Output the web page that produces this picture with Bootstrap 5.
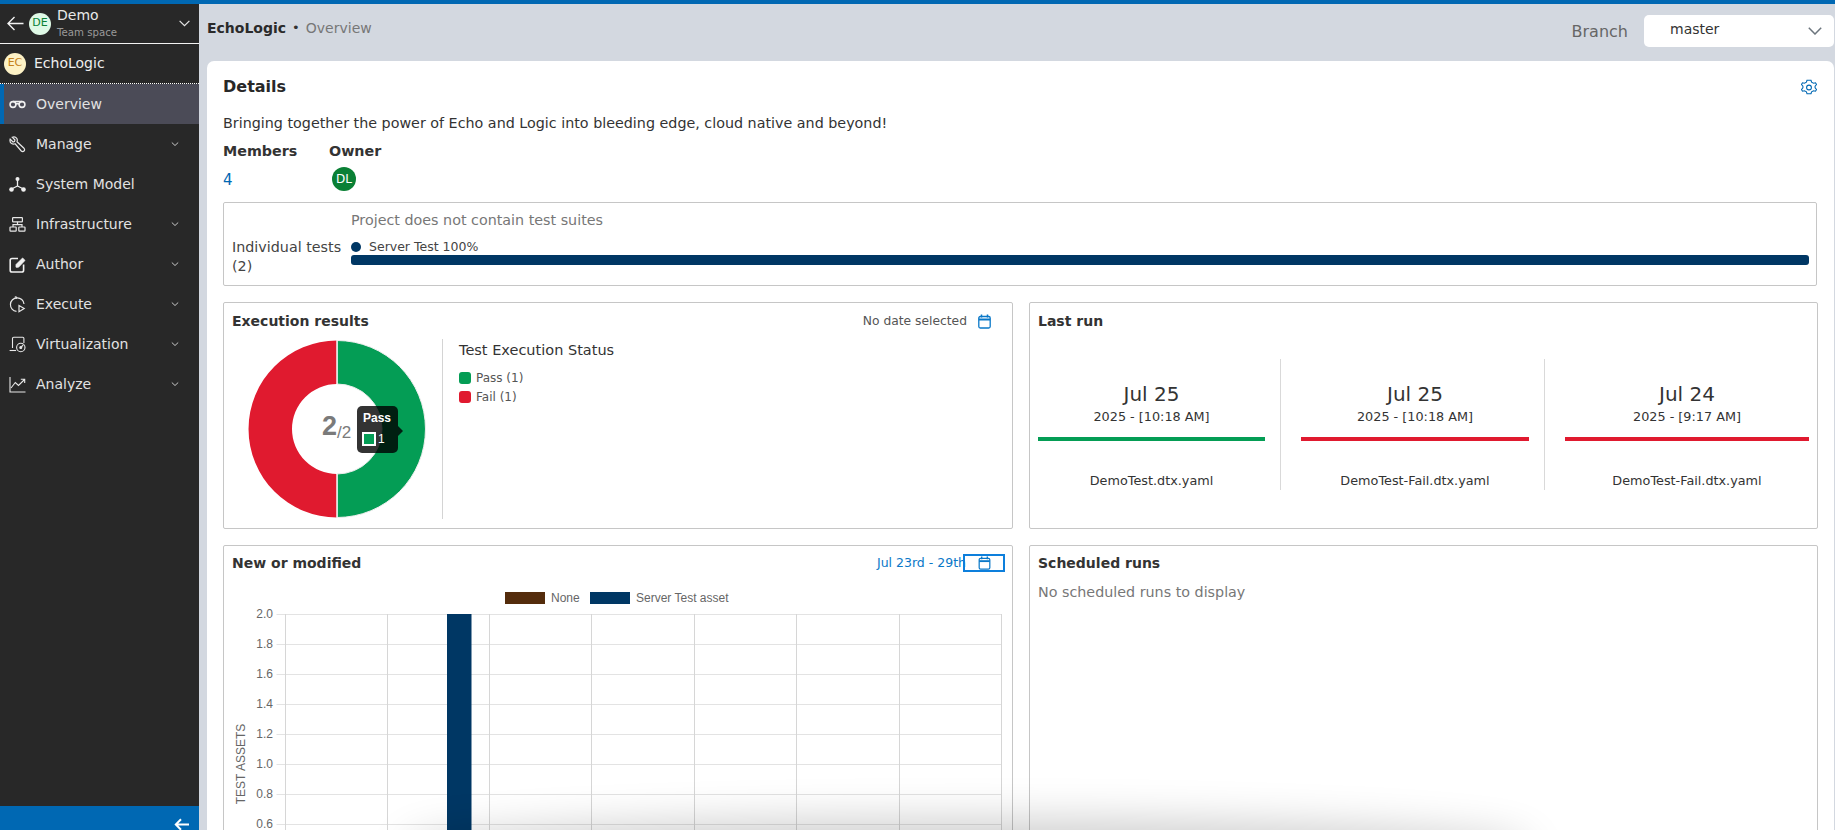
<!DOCTYPE html>
<html lang="en">
<head>
<meta charset="utf-8">
<title>EchoLogic Overview</title>
<link href="https://cdn.jsdelivr.net/npm/bootstrap@5.3.0/dist/css/bootstrap.min.css" rel="stylesheet">
<style>
html,body{height:830px;overflow:hidden}
body{font-family:"DejaVu Sans",sans-serif;font-size:14.3px;color:#333;background:#d3d8e0}
.ts-top{height:4px;background:#0068b3;flex:none}
.ts-shell{height:826px}
.ts-side{width:199px;flex:none;background:#282828;color:#e2e2e2}
.ts-space{height:40px;border-bottom:1px solid #f2f2f2;padding:0 0 0 7px;flex:none}
.ts-avatar{width:22px;height:22px;border-radius:50%;font-size:11px;flex:none}
.ts-de{background:#dff9e6;color:#0a8035;margin:0 6px 0 5px}
.ts-ec{background:#fdf2c6;color:#c5821b;margin-right:8px}
.ts-sname{font-size:14px;line-height:15px;color:#e8e8e8}
.ts-ssub{font-size:10.2px;line-height:13px;color:#9a9a9a;margin-top:3px}
.ts-project{height:40px;padding-left:4px;border-bottom:1px dotted #fff;font-size:14px;color:#eee;flex:none}
.ts-item{height:40px;padding-left:9px;color:#e2e2e2;font-size:14px;border-left:0 solid #0068b3;flex:none}
.ts-item svg.ts-ico{width:17px;height:17px;margin-right:10px;flex:none}
.ts-on{background:#4b4b57;border-left-width:4px;padding-left:5px}
.ts-chev{margin-left:auto;margin-right:20px;width:8px;height:8px}
.ts-foot{height:24px;background:#0068b3;padding:12px 10px 0 0;flex:none}
.ts-main{min-width:0;margin-left:8px}
.ts-crumb{height:57px;padding:0 1px 4px 0;flex:none;font-size:14px}
.ts-crumb b{color:#2a2a2a;margin-bottom:5px}
.ts-dot{font-size:13px;margin:0 6px 5px;color:#333}
.ts-view{color:#777;margin-bottom:5px}
.ts-branch{font-size:16px;color:#666;margin:3px 16px 0 0}
.ts-select{width:190px;height:32px;border-radius:5px;background:#fff;padding:0 12px 3px 26px;font-size:14px}
.ts-sheet{background:#fff;border-radius:7px 7px 0 0;padding:15px 17px 0 16px;margin-right:1px;flex:1 1 auto;min-height:0;overflow:hidden}
.ts-h1{font-size:16px;font-weight:700;color:#282828;line-height:22px}
.ts-para{line-height:20px;margin:15px 0 0}
.ts-lbl{font-weight:700;line-height:18px;margin-top:9px}
.ts-four{color:#0068b3;font-size:15px;line-height:24px;margin-top:8px}
.ts-dl{width:24px;height:24px;border-radius:50%;background:#0a8035;color:#fff;font-size:12px;margin:7px 0 0 3px}
.ts-box{border:1px solid #c6c6c6;border-radius:2px;background:#fff}
.ts-tests{height:84px;margin-top:10px;padding:0 7px 0 8px}
.ts-tlabel{width:119px;line-height:19px;margin-top:35px;color:#444;flex:none}
.ts-muted{color:#777}
.ts-suite{font-size:12.5px;line-height:14px;margin-top:10px;color:#444}
.ts-pdot{width:10px;height:10px;border-radius:50%;background:#003764;display:inline-block;margin:0 8px 0 0}
.ts-pbar{height:10px;border-radius:3px;background:#003764;margin-top:1px}
.ts-grid{display:grid;grid-template-columns:790px 789px;column-gap:16px;margin-top:16px;row-gap:16px}
.ts-res{height:227px;padding:9px 8px;position:relative}
.ts-title{font-size:14px;font-weight:700;line-height:18px;color:#333}
.ts-date{font-size:12.3px;color:#555;margin-right:11px}
.ts-legend{font-size:12px;color:#555;line-height:18.500px}
.ts-sw{width:12px;height:12px;border-radius:3px;margin-right:5px;display:inline-block;vertical-align:-2px}
.ts-green{background:#049d55}
.ts-red{background:#e01a2f}
.ts-divider{width:1px;background:#d4d4d4;height:180px;margin:7px 16px 0 8px;flex:none}
.ts-tip{position:absolute;left:133px;top:103px;width:41px;height:47px;border-radius:5px;background:rgba(0,0,0,.8);color:#fff;font-family:"Liberation Sans",sans-serif;font-size:12px;padding:3px 6px}
.ts-tip::after{content:"";position:absolute;right:-5px;top:20px;border:5px solid transparent;border-left-color:rgba(0,0,0,.8);border-right:0}
.ts-swatch{width:14px;height:14px;border:2px solid #fff;background:#049d55;margin:5px 2px 0 -1px;flex:none}
.ts-runcol{width:244px;text-align:center;flex:none;padding-top:22px}
.ts-day{font-size:20px;line-height:26px;color:#333}
.ts-year{font-size:12.8px;line-height:18px;color:#333;margin-top:1px}
.ts-rule{height:4px;margin:11px 0 31px}
.ts-file{font-size:12.8px;line-height:18px;color:#333}
.ts-sep{width:1px;height:131px;background:#d9d9d9;margin:0 20px 0 15px;flex:none}
.ts-new{height:400px;padding:8px 8px}
.ts-range{color:#0a78c8;font-size:12.5px;margin-right:-3px}
.ts-calbox{width:42px;height:18px;border:2px solid #0d7fdc;flex:none;margin-right:-1px}
.ts-chart{display:block;margin:4px 0 0 -9px}
.ts-donut{margin-top:5px;flex:none}
.ts-status{line-height:18px;margin:9px 0 10px;color:#333;font-size:14.5px}
.ts-fade{position:absolute;left:430px;right:330px;top:844px;height:20px;border-radius:50%;box-shadow:0 0 44px 24px rgba(0,0,0,.2);pointer-events:none}
</style>
</head>
<body>
<div class="ts-top"></div>
<div class="ts-shell d-flex">
  <aside class="ts-side d-flex flex-column">
    <div class="ts-space d-flex align-items-center">
      <svg width="17" height="15" viewBox="0 0 17 15" fill="none" stroke="#f2f2f2" stroke-width="1.4"><path d="M16.500 7.500H1M7.500 1L1 7.500l6.500 6.500"/></svg>
      <span class="ts-avatar ts-de d-flex align-items-center justify-content-center">DE</span>
      <div><div class="ts-sname">Demo</div><div class="ts-ssub">Team space</div></div>
      <svg class="ms-auto" style="margin-right:9px" width="11" height="7" viewBox="0 0 11 7" fill="none" stroke="#e6e6e6" stroke-width="1.2"><path d="M.6.800l4.900 4.900L10.400.800"/></svg>
    </div>
    <div class="ts-project d-flex align-items-center">
      <span class="ts-avatar ts-ec d-flex align-items-center justify-content-center">EC</span>EchoLogic
    </div>
    <div class="ts-item ts-on d-flex align-items-center">
      <svg class="ts-ico" viewBox="0 0 17 17" fill="none" stroke="#f0f0f0" stroke-width="1.6"><circle cx="4" cy="8.500" r="2.900"/><circle cx="13" cy="8.500" r="2.900"/><path d="M4 5.500h9M6.500 8c1.400-.5 2.600-.5 4 0"/></svg>Overview
    </div>
    <div class="ts-item d-flex align-items-center">
      <svg class="ts-ico" viewBox="0 0 17 17" fill="none" stroke="#e8e8e8" stroke-width="1.200"><path d="M3.200 1.200L6 4 5.500 5.500 4 6 1.200 3.200C.7 5 1.200 6.700 2.600 7.600c1.200.7 2.500.6 3.500.2L12.300 15c.8.8 2 .8 2.700 0 .8-.7.8-1.900 0-2.700L8 5.800c.4-1.100.4-2.400-.3-3.500C6.800 1 5 .6 3.200 1.200z"/></svg>Manage
      <svg class="ts-chev" viewBox="0 0 8 8" fill="none" stroke="#c8c8c8" stroke-width="1"><path d="M.8 2.500L4 5.500l3.200-3"/></svg>
    </div>
    <div class="ts-item d-flex align-items-center">
      <svg class="ts-ico" viewBox="0 0 17 17" fill="#f0f0f0" stroke="#f0f0f0"><circle cx="8.500" cy="3" r="2" stroke="none"/><circle cx="2.500" cy="13.500" r="2.300" stroke="none"/><circle cx="14.500" cy="13.500" r="2.300" stroke="none"/><path d="M8.500 4v6M8.500 10l-5 2.500M8.500 10l5 2.500" fill="none" stroke-width="1.300"/></svg>System Model
    </div>
    <div class="ts-item d-flex align-items-center">
      <svg class="ts-ico" viewBox="0 0 17 17" fill="none" stroke="#e8e8e8" stroke-width="1.200"><rect x="3.600" y="1.600" width="9.800" height="4.200" rx=".6"/><rect x="1" y="11" width="6.200" height="4.200" rx=".6"/><rect x="9.800" y="11" width="6.200" height="4.200" rx=".6"/><path d="M8.500 5.800v2.800M4 11V8.600h9V11"/></svg>Infrastructure
      <svg class="ts-chev" viewBox="0 0 8 8" fill="none" stroke="#c8c8c8" stroke-width="1"><path d="M.8 2.500L4 5.500l3.200-3"/></svg>
    </div>
    <div class="ts-item d-flex align-items-center">
      <svg class="ts-ico" viewBox="0 0 17 17" fill="none" stroke="#f0f0f0" stroke-width="1.600"><path d="M9 2.500H3a1.800 1.800 0 0 0-1.800 1.800v9.900A1.800 1.800 0 0 0 3 16h9.800a1.800 1.800 0 0 0 1.800-1.800V8.500"/><path d="M7 11.200V8.600L13.600 2l2.400 2.400-6.500 6.800z" fill="#f0f0f0" stroke-width=".8"/></svg>Author
      <svg class="ts-chev" viewBox="0 0 8 8" fill="none" stroke="#c8c8c8" stroke-width="1"><path d="M.8 2.500L4 5.500l3.200-3"/></svg>
    </div>
    <div class="ts-item d-flex align-items-center">
      <svg class="ts-ico" viewBox="0 0 17 17" fill="none" stroke="#e8e8e8" stroke-width="1.200"><path d="M7.500 15.400A6.800 6.800 0 1 1 15 8"/><path d="M7.700 1.200L5.800.8M7.700 1.200l-.7 1.500"/><path d="M10 9.500v6.200l5.200-3.100z"/></svg>Execute
      <svg class="ts-chev" viewBox="0 0 8 8" fill="none" stroke="#c8c8c8" stroke-width="1"><path d="M.8 2.500L4 5.500l3.200-3"/></svg>
    </div>
    <div class="ts-item d-flex align-items-center">
      <svg class="ts-ico" viewBox="0 0 17 17" fill="none" stroke="#e8e8e8" stroke-width="1.100"><path d="M3.500 12V2.500a1.200 1.200 0 0 1 1.200-1.200h9a1.200 1.200 0 0 1 1.200 1.200V7"/><path d="M.6 14.500h6.500"/><circle cx="11.800" cy="11.500" r="4.200"/><circle cx="11.800" cy="11.500" r="1" fill="#e8e8e8"/><path d="M12.400 10.800l1.800-1.800"/></svg>Virtualization
      <svg class="ts-chev" viewBox="0 0 8 8" fill="none" stroke="#c8c8c8" stroke-width="1"><path d="M.8 2.500L4 5.500l3.200-3"/></svg>
    </div>
    <div class="ts-item d-flex align-items-center">
      <svg class="ts-ico" viewBox="0 0 17 17" fill="none" stroke="#e8e8e8" stroke-width="1.100"><path d="M1 1v15h15.500"/><path d="M2 12l4.300-5.500 3.200 3L15.500 3.500M11.800 3.200h3.900v3.900"/></svg>Analyze
      <svg class="ts-chev" viewBox="0 0 8 8" fill="none" stroke="#c8c8c8" stroke-width="1"><path d="M.8 2.500L4 5.500l3.200-3"/></svg>
    </div>
    <div class="ts-foot mt-auto d-flex justify-content-end align-items-start">
      <svg width="15" height="13" viewBox="0 0 15 13" fill="none" stroke="#fff" stroke-width="2"><path d="M15 6.500H2M7 1.200L1.800 6.500 7 11.800"/></svg>
    </div>
  </aside>
  <main class="ts-main flex-grow-1 d-flex flex-column">
    <div class="ts-crumb d-flex align-items-center">
      <b>EchoLogic</b><span class="ts-dot">•</span><span class="ts-view">Overview</span>
      <span class="ts-branch ms-auto">Branch</span>
      <div class="ts-select d-flex align-items-center">master
        <svg class="ms-auto" style="margin-top:3px" width="14" height="8" viewBox="0 0 14 8" fill="none" stroke="#6c757d" stroke-width="1.500"><path d="M.8.800L7 7l6.200-6.200"/></svg>
      </div>
    </div>
    <div class="ts-sheet">
      <div class="d-flex align-items-center justify-content-between">
        <div class="ts-h1">Details</div>
        <svg width="16" height="17" viewBox="0 0 16 17" fill="none" stroke="#0068b3" stroke-width="1.100"><path d="M6 1.300h4l.6 1.900 1.900 1 2-.4 1 1.800-1.400 1.500v1.800l1.400 1.500-1 1.800-2-.4-1.900 1-.6 1.900H6l-.6-1.900-1.900-1-2 .4-1-1.800 1.400-1.500V7.100L.5 5.600l1-1.800 2 .4 1.900-1z"/><circle cx="8" cy="8.500" r="2.400"/></svg>
      </div>
      <p class="ts-para">Bringing together the power of Echo and Logic into bleeding edge, cloud native and beyond!</p>
      <div class="d-flex">
        <div style="width:106px"><div class="ts-lbl">Members</div><div class="ts-four">4</div></div>
        <div><div class="ts-lbl">Owner</div><div class="ts-dl d-flex align-items-center justify-content-center">DL</div></div>
      </div>
      <div class="ts-box ts-tests d-flex">
        <div class="ts-tlabel">Individual tests (2)</div>
        <div class="flex-grow-1">
          <div class="ts-muted" style="line-height:20px;margin-top:7px">Project does not contain test suites</div>
          <div class="ts-suite d-flex align-items-center"><span class="ts-pdot"></span><span>Server Test 100%</span></div>
          <div class="ts-pbar"></div>
        </div>
      </div>
      <div class="ts-grid">
        <div class="ts-box ts-res">
          <div class="ts-title">Execution results</div>
          <div class="position-absolute d-flex align-items-center" style="top:9px;right:21px"><span class="ts-date">No date selected</span>
            <svg width="13" height="15" viewBox="0 0 13 15" fill="none" stroke="#0a78c8" stroke-width="1.300"><rect x=".8" y="2.500" width="11.400" height="11.500" rx="1.500"/><path d="M.8 5.500h11.400" stroke-width="2"/><path d="M3.500.5v3M9.500.5v3" stroke-width="1.500"/></svg>
          </div>
          <div class="d-flex" style="margin-top:2px">
            <svg width="202" height="182" viewBox="0 0 202 182" class="ts-donut">
              <circle cx="105" cy="92" r="67" fill="none" stroke="#e6e6e6" stroke-width="41"/>
              <path d="M105 3.500A88.500 88.500 0 0 1 105 180.500V137A45 45 0 0 0 105 47Z" fill="#049d55" stroke="#eee" stroke-width="1"/>
              <path d="M105 3.500A88.500 88.500 0 0 0 105 180.500V137A45 45 0 0 1 105 47Z" fill="#e01a2f"/>
              <path d="M105 3v44M105 137v44" stroke="#f3f3f3" stroke-width="1.500"/>
              <text x="90" y="98" font-family="Liberation Sans" font-weight="700" font-size="27" fill="#7a7a7a">2</text>
              <text x="105" y="101" font-family="Liberation Sans" font-size="17" fill="#7a7a7a">/2</text>
            </svg>
            <div class="ts-divider"></div>
            <div>
              <div class="ts-status">Test Execution Status</div>
              <div class="ts-legend"><span class="ts-sw ts-green"></span>Pass (1)</div>
              <div class="ts-legend"><span class="ts-sw ts-red"></span>Fail (1)</div>
            </div>
          </div>
          <div class="ts-tip"><b>Pass</b><div class="d-flex"><span class="ts-swatch"></span><span style="line-height:24px">1</span></div></div>
        </div>
        <div class="ts-box ts-res">
          <div class="ts-title">Last run</div>
          <div class="d-flex" style="margin-top:29px">
            <div class="ts-runcol" style="width:227px"><div class="ts-day">Jul 25</div><div class="ts-year">2025 - [10:18 AM]</div><div class="ts-rule ts-green"></div><div class="ts-file">DemoTest.dtx.yaml</div></div>
            <div class="ts-sep"></div>
            <div class="ts-runcol" style="width:228px"><div class="ts-day">Jul 25</div><div class="ts-year">2025 - [10:18 AM]</div><div class="ts-rule ts-red"></div><div class="ts-file">DemoTest-Fail.dtx.yaml</div></div>
            <div class="ts-sep"></div>
            <div class="ts-runcol"><div class="ts-day">Jul 24</div><div class="ts-year">2025 - [9:17 AM]</div><div class="ts-rule ts-red"></div><div class="ts-file">DemoTest-Fail.dtx.yaml</div></div>
          </div>
        </div>
        <div class="ts-box ts-new">
          <div class="d-flex align-items-center">
            <div class="ts-title">New or modified</div>
            <span class="ts-range ms-auto">Jul 23rd - 29th</span>
            <span class="ts-calbox d-flex align-items-center justify-content-center"><svg width="13" height="14" viewBox="0 0 13 15" fill="none" stroke="#0a78c8" stroke-width="1.300"><rect x=".8" y="2.500" width="11.400" height="11.500" rx="1.500"/><path d="M.8 5.500h11.400" stroke-width="2"/><path d="M3.500.5v3M9.500.5v3" stroke-width="1.500"/></svg></span>
          </div>
          <svg class="ts-chart" width="788" height="260" viewBox="0 0 788 260" font-family="Liberation Sans" font-size="12" fill="#666">
            <g stroke="#e3e3e3" stroke-width="1">
              <path d="M53.500 37.500H778M53.500 67.500H778M53.500 97.500H778M53.500 127.500H778M53.500 157.500H778M53.500 187.500H778M53.500 217.500H778M53.500 247.500H778"/>
            </g>
            <g stroke="#d6d6d6" stroke-width="1">
              <path d="M62.500 37V260M164.500 37V260M266.500 37V260M368.500 37V260M471.500 37V260M573.500 37V260M676.500 37V260M778.500 37V260"/>
            </g>
            <rect x="224" y="37" width="24.500" height="223" fill="#003764"/>
            <rect x="282" y="15" width="40" height="12" fill="#542c0c"/>
            <text x="328" y="25">None</text>
            <rect x="367" y="15" width="40" height="12" fill="#003764"/>
            <text x="413" y="25">Server Test asset</text>
            <g text-anchor="end">
              <text x="50" y="41">2.0</text><text x="50" y="71">1.8</text><text x="50" y="101">1.6</text><text x="50" y="131">1.4</text><text x="50" y="161">1.2</text><text x="50" y="191">1.0</text><text x="50" y="221">0.8</text><text x="50" y="251">0.6</text>
            </g>
            <text transform="translate(22 187) rotate(-90)" text-anchor="middle">TEST ASSETS</text>
          </svg>
        </div>
        <div class="ts-box ts-new">
          <div class="ts-title">Scheduled runs</div>
          <div class="ts-muted" style="margin-top:10px;line-height:20px">No scheduled runs to display</div>
        </div>
      </div>
    </div>
  </main>
</div>
<div class="ts-fade"></div>
</body>
</html>
